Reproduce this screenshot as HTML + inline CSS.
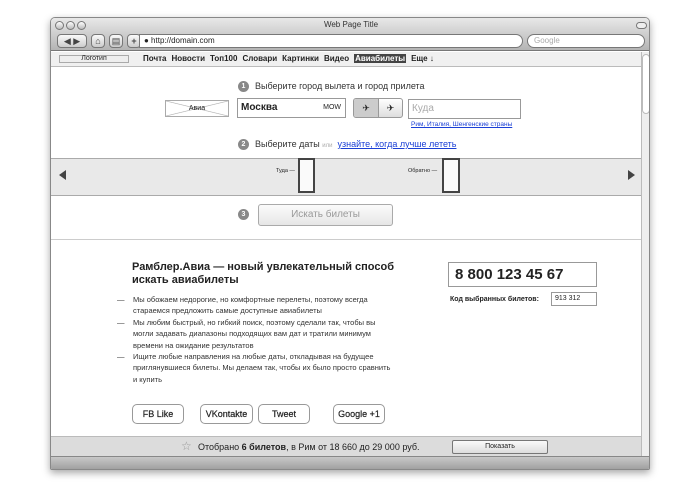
<!DOCTYPE html><html><head><meta charset="utf-8"><style>
*{margin:0;padding:0;box-sizing:border-box}
body{width:700px;height:487px;background:#fff;position:relative;font-family:"Liberation Sans",sans-serif;overflow:hidden;color:#222}
.a{position:absolute}
.win{left:50px;top:17px;width:600px;height:453px;border:1px solid #888;border-radius:5px 5px 2px 2px;box-shadow:0 3px 8px rgba(0,0,0,.35);overflow:hidden;background:#fff}
.tb{left:0;top:0;width:600px;height:33px;background:linear-gradient(#e8e8e8,#b4b4b4);border-bottom:1px solid #777}
.dot{width:9px;height:9px;border-radius:50%;border:1px solid #777;background:linear-gradient(#fff,#bbb);top:3px}
.btn{height:14px;top:16px;border:1px solid #777;border-radius:4px;background:linear-gradient(#fafafa,#ccc);font-size:9px;text-align:center;line-height:12px;color:#444}
.nav{left:0;top:34px;width:590px;height:15px;background:#f0f0f0;border-bottom:1px solid #bbb;font-size:8px;font-weight:bold;line-height:14px}
.nav span{margin-right:5px}
.circ{width:11px;height:11px;border-radius:50%;background:#888;color:#fff;font-size:7px;font-weight:bold;text-align:center;line-height:11px}
.t9{font-size:9px;color:#333}
.inp{border:1px solid #999;background:#fff}
.lnk{color:#1a3fd6;text-decoration:underline}
.sb{border:1px solid #999;border-radius:5px;background:#fff;font-size:9px;text-align:center;line-height:18px;height:20px;top:386px;-webkit-text-stroke:.2px #222}
</style></head><body>
<div class="a win">
 <div class="a tb">
  <div class="a dot" style="left:4px"></div><div class="a dot" style="left:15px"></div><div class="a dot" style="left:26px"></div>
  <div class="a" style="left:0;width:600px;top:2px;text-align:center;font-size:8px;color:#333">Web Page Title</div>
  <div class="a" style="right:4px;top:4px;width:11px;height:7px;border:1px solid #777;border-radius:4px;background:#eee"></div>
  <div class="a btn" style="left:6px;width:30px">◀ ▶</div>
  <div class="a btn" style="left:40px;width:14px">⌂</div>
  <div class="a btn" style="left:58px;width:14px">▤</div>
  <div class="a btn" style="left:76px;width:14px;font-weight:bold">+</div>
  <div class="a" style="left:88px;top:16px;width:384px;height:14px;border:1px solid #777;border-radius:0 7px 7px 0;background:#fff;font-size:8px;line-height:12px;padding-left:4px">● http://domain.com</div>
  <div class="a" style="left:476px;top:16px;width:118px;height:14px;border:1px solid #777;border-radius:7px;background:#fff;font-size:8px;line-height:12px;padding-left:6px;color:#aaa">Google</div>
 </div>
 <div class="a nav">
  <div class="a" style="left:8px;top:3px;width:70px;height:8px;border:1px solid #aaa;font-size:7px;font-weight:normal;line-height:6px;text-align:center;background:#eee">Логотип</div>
  <div class="a" style="left:92px;top:0"><span>Почта</span><span>Новости</span><span>Топ100</span><span>Словари</span><span>Картинки</span><span>Видео</span><span style="background:#444;color:#fff;padding:0 1px">Авиабилеты</span><span>Еще ↓</span></div>
 </div>
 <div class="a" style="left:590px;top:34px;width:10px;height:404px;background:#eee;border-left:1px solid #bbb"></div>
 <div class="a" style="left:591px;top:36px;width:8px;height:60px;border-radius:4px;background:#fff;border:1px solid #bbb"></div>

 <div class="a circ" style="left:187px;top:63px">1</div>
 <div class="a t9" style="left:204px;top:63px">Выберите город вылета и город прилета</div>
 <div class="a" style="left:114px;top:82px;width:64px;height:17px;border:1px solid #aaa;font-size:7px;text-align:center;line-height:15px;background:linear-gradient(to top right,transparent 48%,#aaa 50%,transparent 52%),linear-gradient(to bottom right,transparent 48%,#aaa 50%,transparent 52%)">Авиа</div>
 <div class="a inp" style="left:186px;top:80px;width:109px;height:20px;font-size:10px;font-weight:bold;line-height:18px;padding-left:3px">Москва<span style="position:absolute;right:4px;font-size:7px;font-weight:normal">MOW</span></div>
 <div class="a" style="left:302px;top:80px;width:50px;height:20px;border:1px solid #999;border-radius:3px;background:linear-gradient(#fff,#ddd);font-size:9px;line-height:18px;overflow:hidden"><span style="display:inline-block;width:25px;text-align:center;background:#ccc;border-right:1px solid #999">✈</span><span style="display:inline-block;width:23px;text-align:center">✈</span></div>
 <div class="a inp" style="left:357px;top:81px;width:113px;height:20px;font-size:10px;line-height:18px;padding-left:3px;color:#aaa">Куда</div>
 <div class="a lnk" style="left:360px;top:103px;font-size:6.5px">Рим, Италия, Шенгенские страны</div>

 <div class="a circ" style="left:187px;top:121px">2</div>
 <div class="a t9" style="left:204px;top:121px">Выберите даты <span style="font-size:6px;color:#aaa">или</span> &nbsp;<span class="lnk" style="font-size:9px">узнайте, когда лучше лететь</span></div>

 <div class="a" style="left:0;top:140px;width:590px;height:38px;background:#e9e9e9;border-top:1px solid #aaa;border-bottom:1px solid #aaa"></div>
 <div class="a" style="left:8px;top:152px;width:0;height:0;border:5px solid transparent;border-right:7px solid #444;border-left:0"></div>
 <div class="a" style="left:577px;top:152px;width:0;height:0;border:5px solid transparent;border-left:7px solid #444;border-right:0"></div>
 <div class="a" style="left:225px;top:150px;font-size:5.5px">Туда —</div>
 <div class="a" style="left:247px;top:140px;width:17px;height:35px;border:2px solid #444;background:#fafafa"></div>
 <div class="a" style="left:357px;top:150px;font-size:5.5px">Обратно —</div>
 <div class="a" style="left:391px;top:140px;width:18px;height:35px;border:2px solid #444;background:#fafafa"></div>

 <div class="a circ" style="left:187px;top:191px">3</div>
 <div class="a" style="left:207px;top:186px;width:135px;height:22px;border:1px solid #aaa;border-radius:3px;background:linear-gradient(#fbfbfb,#e6e6e6);font-size:10px;color:#999;text-align:center;line-height:20px">Искать билеты</div>
 <div class="a" style="left:0;top:221px;width:590px;height:1px;background:#ccc"></div>

 <div class="a" style="left:81px;top:243px;font-size:11px;font-weight:bold;line-height:13px;width:300px">Рамблер.Авиа — новый увлекательный способ<br>искать авиабилеты</div>
 <div class="a" style="left:66px;top:276px;font-size:7.5px;line-height:11.4px;color:#333;width:300px">
  <div style="position:relative;padding-left:16px"><span class="a" style="left:0">—</span>Мы обожаем недорогие, но комфортные перелеты, поэтому всегда<br>стараемся предложить самые доступные авиабилеты</div>
  <div style="position:relative;padding-left:16px"><span class="a" style="left:0">—</span>Мы любим быстрый, но гибкий поиск, поэтому сделали так, чтобы вы<br>могли задавать диапазоны подходящих вам дат и тратили минимум<br>времени на ожидание результатов</div>
  <div style="position:relative;padding-left:16px"><span class="a" style="left:0">—</span>Ищите любые направления на любые даты, откладывая на будущее<br>приглянувшиеся билеты. Мы делаем так, чтобы их было просто сравнить<br>и купить</div>
 </div>
 <div class="a" style="left:397px;top:244px;width:149px;height:25px;border:1px solid #999;font-size:15px;font-weight:bold;line-height:23px;padding-left:6px">8 800 123 45 67</div>
 <div class="a" style="left:399px;top:278px;font-size:7px;font-weight:bold">Код выбранных билетов:</div>
 <div class="a inp" style="left:500px;top:274px;width:46px;height:14px;font-size:7px;line-height:12px;padding-left:3px">913 312</div>

 <div class="a sb" style="left:81px;width:52px">FB Like</div>
 <div class="a sb" style="left:149px;width:53px">VKontakte</div>
 <div class="a sb" style="left:207px;width:52px">Tweet</div>
 <div class="a sb" style="left:282px;width:52px">Google +1</div>

 <div class="a" style="left:0;top:418px;width:590px;height:20px;background:#dcdcdc;border-top:1px solid #bbb"></div>
 <div class="a" style="left:130px;top:421px;font-size:12px;color:#999">☆</div>
 <div class="a" style="left:147px;top:424px;font-size:9px">Отобрано <b>6 билетов</b>, в Рим от 18 660 до 29 000 руб.</div>
 <div class="a" style="left:401px;top:422px;width:96px;height:14px;border:1px solid #777;border-radius:2px;background:linear-gradient(#fafafa,#ddd);font-size:7px;text-align:center;line-height:12px">Показать</div>
 <div class="a" style="left:0;top:438px;width:600px;height:15px;background:linear-gradient(#c8c8c8,#9a9a9a);border-top:1px solid #888"></div>
</div>
</body></html>
